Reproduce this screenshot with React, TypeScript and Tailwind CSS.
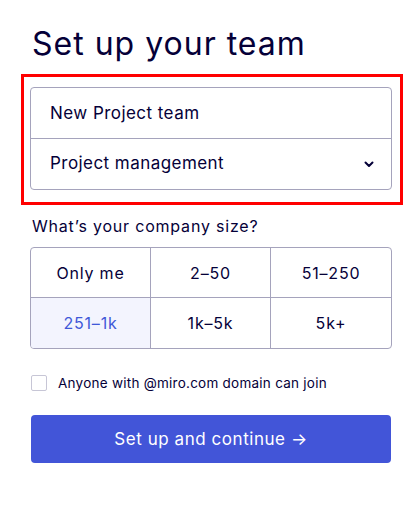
import React, { useState } from 'react';

const sizes = ['Only me', '2–50', '51–250', '251–1k', '1k–5k', '5k+'];

function App() {
  const [teamName, setTeamName] = useState('New Project team');
  const [selected, setSelected] = useState('251–1k');
  const [anyone, setAnyone] = useState(false);

  return (
    <div className="min-h-screen bg-white font-['Inter',sans-serif] text-[#050038]">
      <div className="pl-[30px] pr-[26px] pt-[22px]">
        <h1 className="ml-[2px] text-[32px] leading-[44px] font-normal tracking-[1px]">Set up your team</h1>

        {/* highlighted block */}
        <div className="mt-[8px] -ml-[9px] -mr-[11px] border-[3px] border-[#ff0000] pl-[6px] pr-[8px] pt-[10px] pb-[12px]">
          <div className="rounded-[4px] border border-[#a5a3bc]">
            <input
              value={teamName}
              onChange={(e) => setTeamName(e.target.value)}
              className="block w-full h-[50px] px-[19px] text-[17px] tracking-[0.45px] bg-transparent outline-none"
            />
            <div className="flex items-center justify-between h-[51px] pl-[19px] pr-[17px] border-t border-[#a5a3bc]">
              <span className="text-[17px] tracking-[0.45px]">Project management</span>
              <svg width="10" height="7" viewBox="0 0 10 7" fill="none">
                <path d="M1.5 1.5 5 5l3.5-3.5" stroke="#050038" strokeWidth="2" strokeLinecap="round" strokeLinejoin="round" />
              </svg>
            </div>
          </div>
        </div>

        <p className="ml-[2px] mt-[9px] text-[16px] leading-[24px] tracking-[0.8px]">What’s your company size?</p>

        <div className="mt-[9px] grid grid-cols-3 rounded-[4px] border border-[#a5a3bc] overflow-hidden">
          {sizes.map((s, i) => (
            <button
              key={s}
              onClick={() => setSelected(s)}
              className={[
                'h-[50px] text-[16px] tracking-[0.8px]',
                i % 3 !== 2 ? 'border-r border-[#a5a3bc]' : '',
                i < 3 ? 'border-b border-[#a5a3bc]' : '',
                selected === s ? 'bg-[#f3f4fe] text-[#4058d8]' : 'text-[#050038]',
              ].join(' ')}
            >
              {s}
            </button>
          ))}
        </div>

        <label className="ml-[1px] mt-[24px] flex items-center gap-[11px] text-[13.5px] tracking-[0.25px] cursor-pointer">
          <input
            type="checkbox"
            checked={anyone}
            onChange={(e) => setAnyone(e.target.checked)}
            className="appearance-none w-[16px] h-[16px] rounded-[2px] border border-[#c7c6d6] checked:bg-[#4255d8]"
          />
          <span>Anyone with @miro.com domain can join</span>
        </label>

        <button className="ml-[1px] mt-[22px] w-[360px] h-[48px] rounded-[4px] bg-[#4255d8] text-white text-[17px] tracking-[0.55px]">
          Set up and continue →
        </button>
      </div>
    </div>
  );
}

export default App;
